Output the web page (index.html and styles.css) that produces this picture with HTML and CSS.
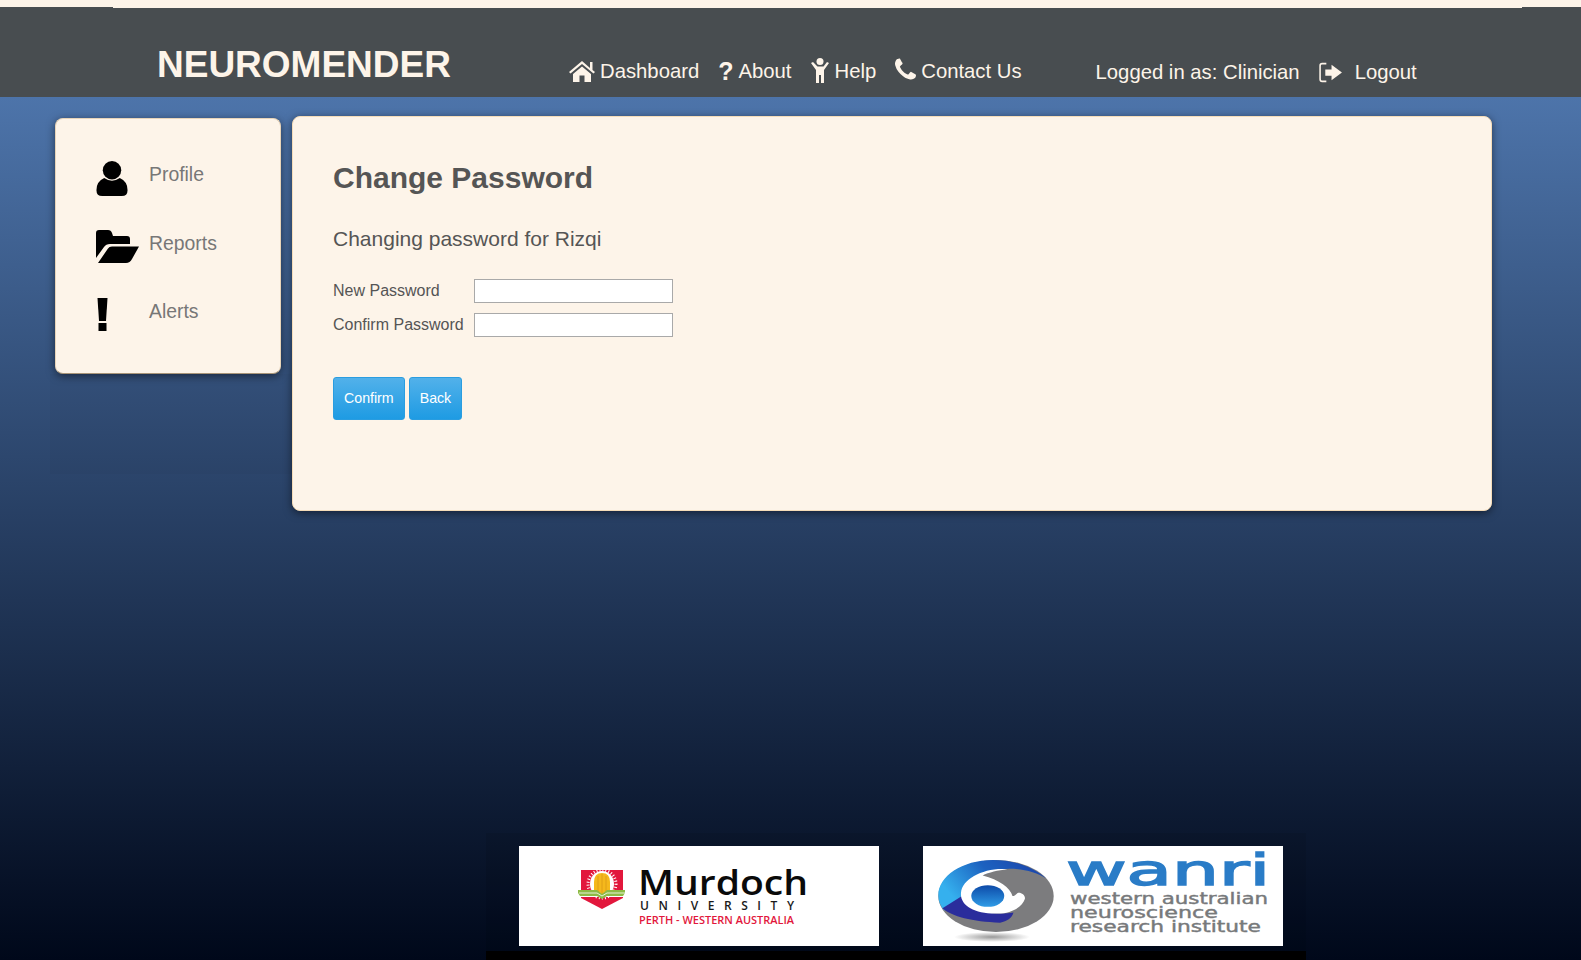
FILE: index.html
```html
<!DOCTYPE html>
<html>
<head>
    <title>Neuromender - Change Password</title>
    <link rel="stylesheet" href="styles.css">
</head>
<body>
    <div class="top-strip">
        <div class="top-edge top-edge-left"></div>
        <div class="top-edge top-edge-right"></div>
    </div>
    <header class="header">
        <div class="brand">NEUROMENDER</div>
        <nav class="nav">
            <a class="nav-item" href="#">
                <svg class="icon-home" viewBox="0 0 26 22"><path d="M13 1 21 8V2h2.500v8L26 12l-1.500 1.500L13 4 1.500 13.500 0 12Z"/><path d="M4 14 13 6.500l9 7.500v8h-6.500v-6.500h-5V22H4Z"/></svg>
                Dashboard
            </a>
            <a class="nav-item" href="#">
                <span class="icon-question">?</span>
                About
            </a>
            <a class="nav-item" href="#">
                <svg class="icon-person" viewBox="0 0 18 26"><circle cx="9" cy="3.500" r="3.500"/><path d="M0 5l2-1 4.500 4.500h6L16 4l2 1-5 7v13h-3v-8H8v8H5V12Z"/></svg>
                Help
            </a>
            <a class="nav-item" href="#">
                <svg class="icon-phone" viewBox="0 0 1408 1408"><path d="M1408 1112q0 27-10 70.500t-21 68.500q-21 50-122 106-94 51-186 51-27 0-53-3.500t-57.500-12.500-47-14.500-55.500-20.500-49-18q-98-35-175-83-127-79-264-216t-216-264q-48-77-83-175-3-9-18-49t-20.500-55.500-14.500-47-12.500-57.500-3.500-53q0-92 51-186 56-101 106-122 25-11 68.500-21t70.500-10q14 0 21 3 18 6 53 76 11 19 30 54t35 63.500 31 53.500q3 4 17.500 25t21.500 35.500 7 28.500q0 20-28.500 50t-62 55-62 53-28.500 46q0 9 5 22.500t8.500 20.500 14 24 11.500 19q76 137 174 235t235 174q2 1 19 11.500t24 14 20.500 8.500 22.500 5q18 0 46-28.500t53-62 55-62 50-28.500q14 0 28.500 7t35.500 21.500 25 17.500q25 15 53.500 31t63.500 35 54 30q70 35 76 53 3 7 3 21z"/></svg>
                Contact Us
            </a>
        </nav>
        <div class="session">
            <span>Logged in as: Clinician</span>
            <svg class="icon-logout" viewBox="0 0 24 20"><path class="logout-bracket" d="M8 1.500H4Q2 1.500 2 3.500v13q0 2 2 2h4"/><path d="M7 7h6V2.500L23 10 13 17.500V13H7Z"/></svg>
            <a class="nav-item" href="#">Logout</a>
        </div>
    </header>

    <div class="page">
        <div class="content">
            <div class="side-column">
                <aside class="sidebar">
                    <a class="side-item" href="#">
                        <span class="side-icon"><svg width="32" height="35" viewBox="0 0 32 36"><circle cx="16" cy="9.500" r="9.500"/><path d="M0 30Q0 21 8 17.500 16 23 24 17.500 32 21 32 30 32 36 26 36H6Q0 36 0 30Z"/></svg></span>
                        <span>Profile</span>
                    </a>
                    <a class="side-item" href="#">
                        <span class="side-icon"><svg width="43" height="33" viewBox="0 0 43 33"><path d="M0 3Q0 0 3 0h9q3 0 4 3l1 3h14q3 0 3 3v5H14q-4 0-6 3L0 28Z"/><path d="M2 33 12 18.500q1-2 4-2h27L36 29q-2 4-6 4Z"/></svg></span>
                        <span>Reports</span>
                    </a>
                    <a class="side-item" href="#">
                        <span class="side-icon"><svg class="icon-alert" width="11" height="33" viewBox="0 0 11 33"><path d="M.5 0h10L9 23H2Z"/><rect x="1.500" y="25" width="8" height="8"/></svg></span>
                        <span>Alerts</span>
                    </a>
                </aside>
                <div class="side-under"></div>
            </div>

            <main class="panel">
                <h1>Change Password</h1>
                <h2>Changing password for Rizqi</h2>
                <form class="password-form">
                    <div class="form-row">
                        <label for="new_password">New Password</label>
                        <input type="password" id="new_password" name="new_password">
                    </div>
                    <div class="form-row">
                        <label for="confirm_password">Confirm Password</label>
                        <input type="password" id="confirm_password" name="confirm_password">
                    </div>
                    <div class="form-buttons">
                        <button type="submit">Confirm</button>
                        <button type="button">Back</button>
                    </div>
                </form>
            </main>
        </div>

        <footer class="footer">
            <div class="logos">
                <svg class="logo" viewBox="0 0 360 100">
                    <path fill="#e2173c" d="M62 24h42v28L83 63 62 52Z"/>
                    <ellipse cx="83" cy="38" rx="12" ry="13" fill="#fff"/>
                    <circle cx="83" cy="38" r="14" fill="none" stroke="#fff" stroke-width="3" stroke-dasharray="1 2"/>
                    <path fill="#f5b81c" d="M75 36q0-9 8-9t8 9v8q0 4-8 7-8-3-8-7Z"/>
                    <path stroke="#d99a18" stroke-width=".8" d="M79 30v17M83 28v21M87 30v17"/>
                    <path fill="#fff" d="M60 49h46v2H62Z"/>
                    <path fill="#8dbb45" d="M59 44h19l5 4 5-4h18v3l-2 3H88l-5 3-5-3H61l-2-3Z"/>
                    <path fill="none" stroke="#fff" stroke-width=".8" d="M60 47h18l5 3 5-3h18"/>
                    <text class="murdoch-name" x="119" y="49" textLength="170" lengthAdjust="spacingAndGlyphs">Murdoch</text>
                    <text class="murdoch-uni" x="121" y="64" textLength="154">UNIVERSITY</text>
                    <text class="murdoch-place" x="120" y="78" textLength="155" lengthAdjust="spacingAndGlyphs">PERTH - WESTERN AUSTRALIA</text>
                </svg>
                <svg class="logo" viewBox="0 0 360 100">
                    <defs>
                        <linearGradient id="ballFill" x1="0" y1="0" x2="0" y2="1">
                            <stop offset="0" stop-color="#0d4aa8"/>
                            <stop offset="1" stop-color="#2f9be6"/>
                        </linearGradient>
                        <linearGradient id="swooshFill" x1="0" y1="0.4" x2="1" y2="0">
                            <stop offset="0" stop-color="#35b0ee"/>
                            <stop offset="0.45" stop-color="#1c62c0"/>
                            <stop offset="1" stop-color="#1c3fa6"/>
                        </linearGradient>
                        <radialGradient id="shadowFill">
                            <stop offset="0" stop-color="#999"/>
                            <stop offset="1" stop-color="#fff"/>
                        </radialGradient>
                    </defs>
                    <ellipse cx="69" cy="91" rx="38" ry="5" fill="url(#shadowFill)"/>
                    <g transform="translate(73 50) scale(1.03) translate(-73 -50)">
                        <ellipse cx="73" cy="50" rx="56" ry="35" fill="#7c7c7e"/>
                        <path fill="url(#swooshFill)" d="M122 33C108 21 90 15 70 15 40 15 17 31 17 49c0 6 2 11 6 15l17-14c2-12 18-22 38-26 16-2 33 2 44 9Z"/>
                        <path fill="#2a2d9c" d="M21 62C30 70 50 75 77 76 84 74 88 72 90 66 80 68 60 68 46 60 42 56 40 52 40 50Z"/>
                        <path fill="#fff" d="M84 24C62 22 40 33 39 47 38 59 52 67 72 67 88 68 99 60 101 53 102 49 97 46 94 47 92 49 91 50 89 50 87 42 76 34 60 30 66 27 75 25 84 24Z"/>
                        <ellipse cx="65" cy="50" rx="16" ry="10.500" fill="url(#ballFill)"/>
                    </g>
                    <text class="wanri-name" x="143" y="39" textLength="204" lengthAdjust="spacingAndGlyphs">wanri</text>
                    <text class="wanri-line" x="147" y="58" textLength="198" lengthAdjust="spacingAndGlyphs">western australian</text>
                    <text class="wanri-line" x="147" y="72" textLength="148" lengthAdjust="spacingAndGlyphs">neuroscience</text>
                    <text class="wanri-line" x="147" y="86" textLength="191" lengthAdjust="spacingAndGlyphs">research institute</text>
                </svg>
            </div>
            <div class="footer-bar"></div>
        </footer>
    </div>
</body>
</html>
```

FILE: styles.css
```css
* {
    box-sizing: border-box;
}
html, body {
    height: 100%;
}
body {
    margin: 0;
    display: flex;
    flex-direction: column;
    overflow: hidden;
    font-family: "Liberation Sans", Arial, sans-serif;
    background-color: #fdf4e9;
}
a {
    color: inherit;
    text-decoration: none;
}

/* top edge */
.top-strip {
    height: 8px;
    flex: none;
    display: flex;
    justify-content: space-between;
    align-items: flex-end;
}
.top-edge {
    height: 1px;
    background-color: #484d50;
}
.top-edge-left {
    width: 113px;
}
.top-edge-right {
    width: 59px;
}

/* header */
.header {
    height: 89px;
    flex: none;
    display: flex;
    align-items: flex-end;
    padding: 0 0 11px 157px;
    background-color: #484d50;
    color: #fdf4e9;
}
.brand {
    width: 412px;
    font-size: 37px;
    font-weight: bold;
    line-height: 42px;
}
.nav {
    display: flex;
    gap: 19px;
    font-size: 20.3px;
    line-height: 24px;
    margin-bottom: 2px;
}
.nav-item {
    display: flex;
    align-items: center;
    gap: 5px;
    white-space: nowrap;
}
.nav-item svg {
    fill: currentColor;
}
.icon-home {
    width: 26px;
    height: 22px;
}
.icon-question {
    font-weight: bold;
    font-size: 25px;
}
.icon-person {
    width: 18px;
    height: 26px;
    margin-right: 1px;
}
.icon-phone {
    width: 21px;
    height: 22px;
    margin-top: -4px;
}
.session {
    display: flex;
    align-items: center;
    margin-left: 74px;
    margin-bottom: 2px;
    font-size: 20.3px;
    line-height: 24px;
    white-space: nowrap;
}
.icon-logout {
    width: 25px;
    height: 21px;
    margin: 0 12px 0 18px;
    fill: currentColor;
}
.logout-bracket {
    fill: none;
    stroke: currentColor;
    stroke-width: 1.5;
}

/* page body */
.page {
    flex: 1;
    display: flex;
    flex-direction: column;
    background: linear-gradient(#4d74aa, #00081a);
}
.content {
    flex: 1;
    display: flex;
    align-items: flex-start;
    padding: 19px 0 0 50px;
}
.side-column {
    width: 242px;
    padding-top: 2px;
}
.side-under {
    height: 100px;
    background-color: rgba(0, 0, 0, 0.02);
}
.sidebar {
    width: 226px;
    height: 256px;
    margin-left: 5px;
    padding: 42px 0 0 40px;
    display: flex;
    flex-direction: column;
    gap: 20px;
    background-color: #fdf4e9;
    border: 1px solid #e8d4b8;
    border-bottom-color: #a89478;
    border-radius: 8px;
    box-shadow: 0 2px 8px rgba(0, 0, 0, 0.5);
}
.side-item {
    height: 48.500px;
    display: flex;
    align-items: flex-start;
    font-size: 19.4px;
    line-height: 26px;
    color: #777;
}
.side-icon {
    width: 53px;
    display: flex;
}
.icon-alert {
    margin-left: 1px;
}
.panel {
    width: 1200px;
    height: 395px;
    padding: 43px 40px;
    background-color: #fdf4e9;
    border: 1px solid #f5dcb8;
    border-radius: 8px;
    box-shadow: 0 2px 8px rgba(0, 0, 0, 0.5);
    color: #555;
}
h1 {
    margin: 0;
    font-size: 30px;
    line-height: 35px;
    font-weight: bold;
}
h2 {
    margin: 30px 0 0;
    font-size: 21px;
    line-height: 28px;
    font-weight: normal;
}
.password-form {
    margin-top: 26px;
}
.form-row {
    display: flex;
    align-items: center;
    height: 24px;
    margin-bottom: 10px;
}
label {
    width: 141px;
    font-size: 16px;
}
input {
    width: 199px;
    height: 24px;
    padding: 2px 4px;
    border: 1px solid #a9a9a9;
    background-color: #fff;
}
.form-buttons {
    display: flex;
    gap: 4px;
    margin-top: 40px;
}
button {
    height: 43px;
    padding: 0 10px 2px;
    font-family: inherit;
    font-size: 14.2px;
    color: #fff;
    background: linear-gradient(#52b1ea, #1e9be3);
    border: 1px solid #2a9de0;
    border-radius: 3px;
    cursor: pointer;
}

/* footer */
.footer {
    flex: none;
    margin-left: 486px;
    width: 820px;
    height: 127px;
    display: flex;
    flex-direction: column;
    background-color: rgba(0, 0, 0, 0.08);
}
.logos {
    flex: 1;
    display: flex;
    gap: 44px;
    padding: 13px 0 0 33px;
}
.logo {
    width: 360px;
    height: 100px;
    background-color: #fff;
}
.footer-bar {
    height: 9px;
    background-color: #000;
}
.murdoch-name {
    font-family: "Open Sans", sans-serif;
    font-size: 35px;
    font-weight: 600;
    fill: #0a0a0a;
}
.murdoch-uni {
    font-family: "Open Sans", sans-serif;
    font-size: 12px;
    font-weight: 600;
    fill: #1a1a1a;
}
.murdoch-place {
    font-family: "Open Sans", sans-serif;
    font-size: 10px;
    font-weight: 600;
    fill: #e2173c;
}
.wanri-name {
    font-family: "DejaVu Sans", sans-serif;
    font-size: 42px;
    fill: #2a7cc7;
    stroke: #2a7cc7;
    stroke-width: 1.4;
}
.wanri-line {
    font-family: "DejaVu Sans", sans-serif;
    font-size: 15px;
    fill: #77797b;
    stroke: #77797b;
    stroke-width: 0.4;
}
```
